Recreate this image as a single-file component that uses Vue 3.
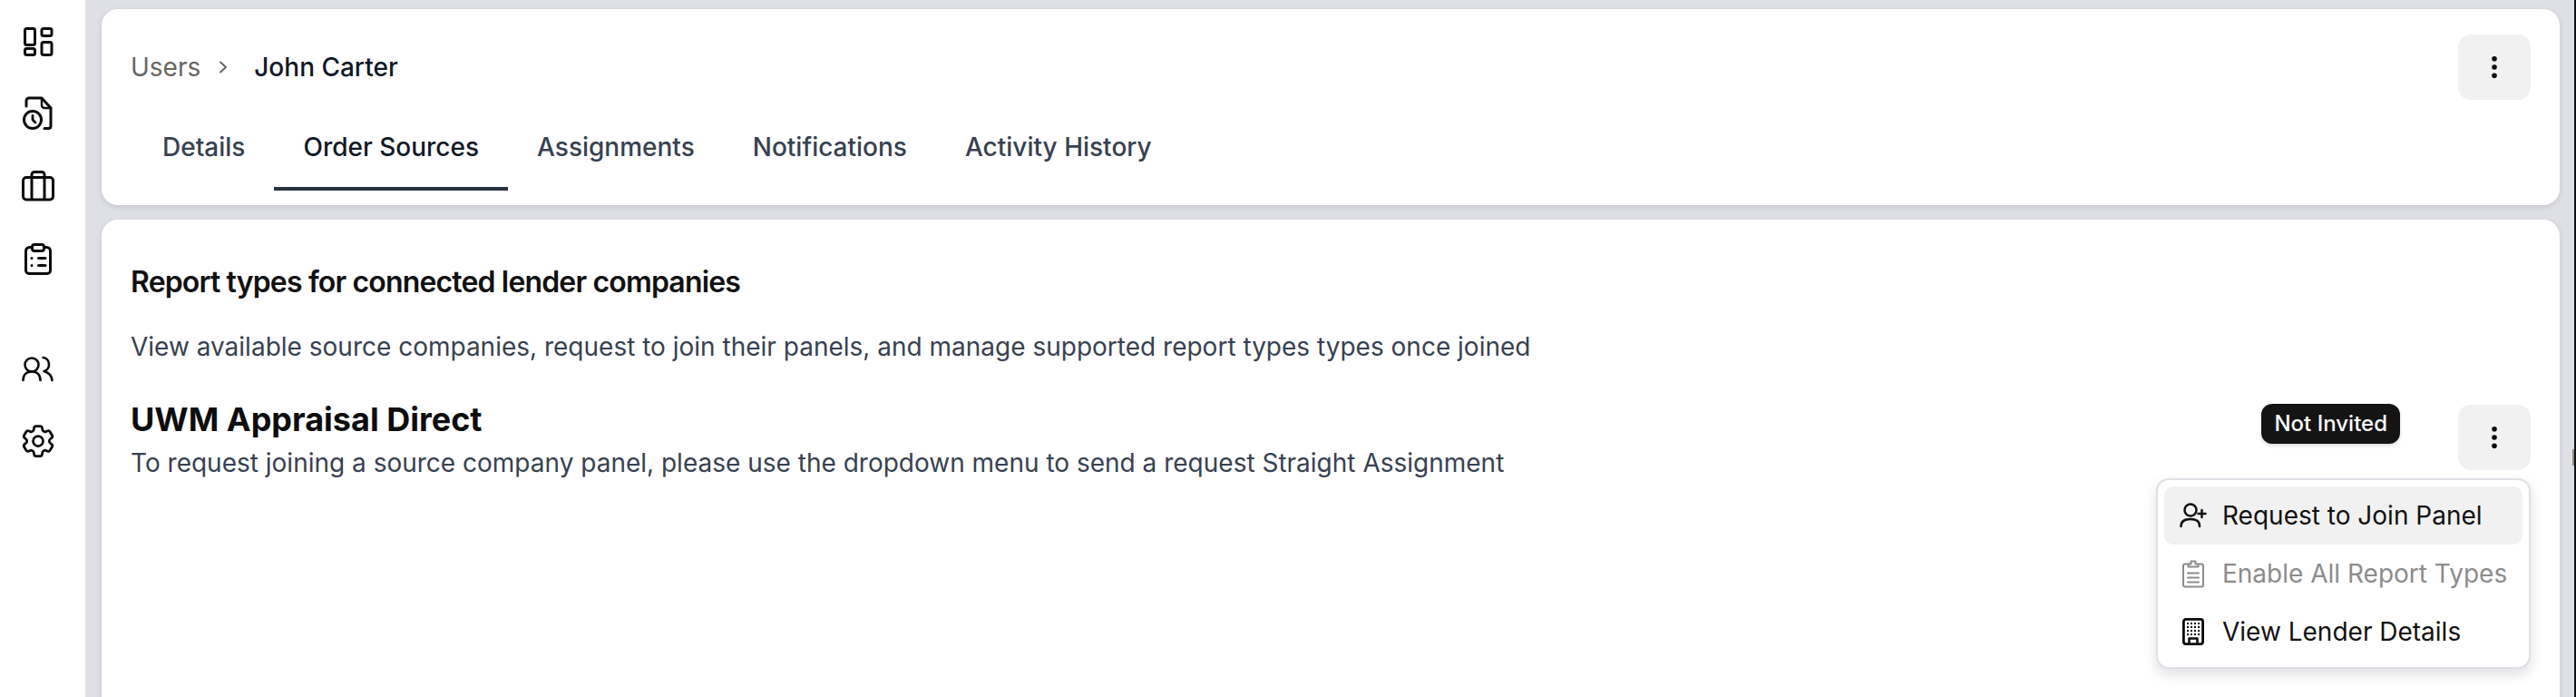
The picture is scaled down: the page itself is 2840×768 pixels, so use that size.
<template>
  <div class="app-shell">
    <aside class="sidebar">
      <nav class="nav-group">
        <a class="nav-item">
          <svg width="40" height="40" viewBox="0 0 40 40" fill="none" stroke="#0c0c0c" stroke-width="3" stroke-linejoin="round">
            <rect x="5.500" y="5.500" width="11" height="18" rx="2" />
            <rect x="24" y="5.500" width="11" height="8" rx="2" />
            <rect x="5.500" y="27.500" width="11" height="7" rx="2" />
            <rect x="24" y="20.500" width="11" height="14" rx="2" />
          </svg>
        </a>
        <a class="nav-item">
          <svg width="40" height="40" viewBox="0 0 40 40" fill="none" stroke="#0c0c0c" stroke-width="3" stroke-linecap="round" stroke-linejoin="round">
            <path d="M7 11V5a3 3 0 0 1 3-3h14l10 11v20a2.500 2.500 0 0 1-2.500 2.500H27" />
            <path d="M24 2.500V10a3 3 0 0 0 3 3h7" stroke-width="2.500" />
            <circle cx="14" cy="26" r="9.500" />
            <path d="M14 21.500V26l3 3" stroke-width="2.800" />
          </svg>
        </a>
        <a class="nav-item">
          <svg width="40" height="40" viewBox="0 0 40 40" fill="none" stroke="#0c0c0c" stroke-width="3" stroke-linejoin="round">
            <rect x="3.500" y="9.500" width="33" height="24.500" rx="3.500" />
            <path d="M13 34V6.500a3 3 0 0 1 3-3h8a3 3 0 0 1 3 3V34" />
          </svg>
        </a>
        <a class="nav-item">
          <svg width="40" height="40" viewBox="0 0 40 40" fill="none" stroke="#0c0c0c" stroke-width="3" stroke-linecap="round" stroke-linejoin="round">
            <path d="M13 6.500h-2.500a4 4 0 0 0-4 4V32a3.500 3.500 0 0 0 3.500 3.500h20a3.500 3.500 0 0 0 3.500-3.500V10.500a4 4 0 0 0-4-4H27" />
            <rect x="13.500" y="3.500" width="13" height="7" rx="2.500" />
            <path d="M20.500 18.500H28M20.500 26.500H28" />
            <path d="M13 18.500h.01M13 26.500h.01" />
          </svg>
        </a>
      </nav>
      <nav class="nav-group nav-lower">
        <a class="nav-item">
          <svg width="40" height="40" viewBox="0 0 40 40" fill="none" stroke="#0c0c0c" stroke-width="2.600" stroke-linecap="round" stroke-linejoin="round">
            <circle cx="13" cy="17" r="7.500" />
            <path d="M3.500 34c0-6 4-9.500 9.500-9.500s9.500 3.500 9.500 9.500" />
            <path d="M25.500 9c3.800 0 6.500 3.500 6.500 7.500s-2.500 7-5.500 7.500c5 1.500 8.500 5 9 10" />
          </svg>
        </a>
        <a class="nav-item">
          <svg width="44" height="44" viewBox="0 0 24 24" fill="none" stroke="#0c0c0c" stroke-width="1.500" stroke-linecap="round" stroke-linejoin="round">
            <path d="M9.594 3.940c.09-.542.56-.94 1.110-.94h2.593c.55 0 1.020.398 1.110.94l.213 1.281c.063.374.313.686.645.870.074.040.147.083.220.127.325.196.72.257 1.075.124l1.217-.456a1.125 1.125 0 0 1 1.370.490l1.296 2.247a1.125 1.125 0 0 1-.26 1.431l-1.003.827c-.293.241-.438.613-.43.992a7.723 7.723 0 0 1 0 .255c-.008.378.137.75.43.991l1.004.827c.424.35.534.955.26 1.430l-1.298 2.247a1.125 1.125 0 0 1-1.369.491l-1.217-.456c-.355-.133-.75-.072-1.076.124a6.470 6.470 0 0 1-.22.128c-.331.183-.581.495-.644.869l-.213 1.281c-.09.543-.56.94-1.110.94h-2.594c-.55 0-1.019-.398-1.110-.94l-.213-1.281c-.062-.374-.312-.686-.644-.87a6.520 6.520 0 0 1-.22-.127c-.325-.196-.72-.257-1.076-.124l-1.217.456a1.125 1.125 0 0 1-1.369-.49l-1.297-2.247a1.125 1.125 0 0 1 .26-1.431l1.004-.827c.292-.24.437-.613.43-.991a6.932 6.932 0 0 1 0-.255c.007-.38-.138-.751-.43-.992l-1.004-.827a1.125 1.125 0 0 1-.26-1.430l1.297-2.247a1.125 1.125 0 0 1 1.370-.491l1.216.456c.356.133.751.072 1.076-.124.072-.044.146-.086.22-.128.332-.183.582-.495.644-.869l.214-1.280Z" />
            <circle cx="12" cy="12" r="3" />
          </svg>
        </a>
      </nav>
    </aside>

    <main class="content">
      <section class="card header-card">
        <div class="header-top">
          <div class="breadcrumb">
            <span class="crumb-link">Users</span>
            <svg class="crumb-sep" width="28" height="28" viewBox="0 0 28 28" fill="none" stroke="#666" stroke-width="2" stroke-linecap="round" stroke-linejoin="round">
              <path d="M11 8.500l6 5.500-6 5.500" />
            </svg>
            <span class="crumb-current">John Carter</span>
          </div>
          <button class="kebab">
            <svg width="8" height="28" viewBox="0 0 8 28" fill="#0a0a0a">
              <circle cx="4" cy="4.700" r="2.800" />
              <circle cx="4" cy="14" r="2.800" />
              <circle cx="4" cy="23.300" r="2.800" />
            </svg>
          </button>
        </div>
        <div class="tabs">
          <a v-for="tab in tabs" :key="tab" class="tab" :class="{ active: tab === activeTab }">{{ tab }}</a>
        </div>
      </section>

      <section class="card body-card">
        <h2 class="section-title">Report types for connected lender companies</h2>
        <p class="section-desc">View available source companies, request to join their panels, and manage supported report types types once joined</p>

        <div class="lender-row">
          <div class="lender-info">
            <h3 class="lender-name">UWM Appraisal Direct</h3>
            <p class="lender-note">To request joining a source company panel, please use the dropdown menu to send a request Straight Assignment</p>
          </div>
          <span class="badge">Not Invited</span>
          <button class="kebab">
            <svg width="8" height="28" viewBox="0 0 8 28" fill="#0a0a0a">
              <circle cx="4" cy="4.700" r="2.800" />
              <circle cx="4" cy="14" r="2.800" />
              <circle cx="4" cy="23.300" r="2.800" />
            </svg>
          </button>

          <div class="menu">
            <div class="menu-item highlighted">
              <svg width="32" height="32" viewBox="0 0 32 32" fill="none" stroke="#111" stroke-width="2.500" stroke-linecap="round" stroke-linejoin="round">
                <circle cx="13" cy="10" r="6.500" />
                <path d="M2.500 28c0-5.500 4-8 10.500-8 3 0 5.500.5 7.500 1.800 1.500 1.300 2.500 3.300 2.500 6.200" />
                <path d="M25.500 10v8M21.500 14h8" />
              </svg>
              <span>Request to Join Panel</span>
            </div>
            <div class="menu-item disabled">
              <svg width="32" height="32" viewBox="0 0 32 32" fill="none" stroke="#8c8c8c" stroke-width="2" stroke-linecap="round" stroke-linejoin="round">
                <path d="M10.500 5.500H7a2 2 0 0 0-2 2v21a2 2 0 0 0 2 2h18a2 2 0 0 0 2-2v-21a2 2 0 0 0-2-2h-3.500" />
                <path d="M10.500 8.500v-3h3V2.500h5v3h3v3z" />
                <path d="M10 15.500h12M10 20.500h12M10 25.500h12" />
              </svg>
              <span>Enable All Report Types</span>
            </div>
            <div class="menu-item">
              <svg width="32" height="32" viewBox="0 0 32 32" fill="none" stroke="#0a0a0a" stroke-width="2.800" stroke-linejoin="round">
                <rect x="5.400" y="2.400" width="21.200" height="27.200" rx="2.500" />
                <path d="M11.500 29.500v-6h9v6" stroke-width="2.500" />
                <g fill="#0a0a0a" stroke="none">
                  <template v-for="row in [7, 11, 15, 19]" :key="row">
                    <rect v-for="col in [10, 14, 18, 22]" :key="col" :x="col - 1" :y="row - 1" width="2" height="2" />
                  </template>
                </g>
              </svg>
              <span>View Lender Details</span>
            </div>
          </div>
        </div>
      </section>
    </main>
    <i class="scroll-thumb"></i>
  </div>
</template>

<script setup>
const tabs = ['Details', 'Order Sources', 'Assignments', 'Notifications', 'Activity History']
const activeTab = 'Order Sources'
</script>

<style>
html, body { margin: 0; height: 100%; overflow: hidden; background: #dfe0e6; }
</style>

<style scoped>
.app-shell {
  position: relative;
  display: flex;
  width: 2840px;
  height: 768px;
  overflow: hidden;
  font-family: Inter, "Liberation Sans", sans-serif;
  background: #dfe0e6;
  box-sizing: border-box;
  border-right: 2px solid #111;
}

/* little grey mark sitting on the dark edge at the right */
.scroll-thumb {
  position: absolute;
  top: 495px;
  right: 0;
  width: 2px;
  height: 18px;
  background: #8a8a8a;
}

.sidebar {
  width: 94px;
  flex: none;
  background: #fff;
  display: flex;
  flex-direction: column;
  align-items: center;
  padding: 26px 10px 0 0;
  box-sizing: border-box;
}
.nav-group { display: flex; flex-direction: column; align-items: center; gap: 40px; }
.nav-lower { margin-top: 79px; gap: 41px; }
.nav-item { display: flex; width: 44px; height: 40px; align-items: center; justify-content: center; }

.content {
  flex: 1;
  min-width: 0;
  padding: 10px 16px 0 18px;
  display: flex;
  flex-direction: column;
  gap: 16px;
}

.card {
  background: #fff;
  border-radius: 18px;
  box-shadow: 0 2px 6px rgba(20, 20, 40, 0.12);
  box-sizing: border-box;
}

.header-card { height: 216px; padding: 28px 32px 0; flex: none; }
.header-top { display: flex; align-items: flex-start; justify-content: space-between; height: 72px; }
.breadcrumb { display: flex; align-items: center; height: 72px; font-size: 28px; }
.crumb-link { color: #666; }
.crumb-sep { margin: 0 20px 0 11px; }
.crumb-current { color: #111827; font-weight: 500; }

.kebab {
  width: 80px;
  height: 72px;
  flex: none;
  border: none;
  border-radius: 14px;
  background: #f1f1f1;
  display: flex;
  align-items: center;
  justify-content: center;
  padding: 0;
}

.tabs { display: flex; margin-top: 10px; margin-left: 3px; }
.tab {
  height: 90px;
  padding: 25px 32px 0;
  box-sizing: border-box;
  font-size: 28px;
  line-height: 34px;
  font-weight: 500;
  color: #374151;
  border-bottom: 4px solid transparent;
}
.tab.active { color: #111827; border-bottom-color: #2a3342; }

.body-card { flex: none; height: 560px; padding: 50px 32px 0; }
.section-title { margin: 0; font-size: 32px; line-height: 38px; font-weight: 600; letter-spacing: -0.84px; color: #111; }
.section-desc { margin: 33px 0 0; font-size: 28px; line-height: 38px; color: #374151; }

.lender-row { position: relative; display: flex; align-items: flex-start; margin-top: 45px; }
.lender-info { flex: 1; min-width: 0; margin-top: -6px; }
.lender-name { margin: 0; font-size: 36px; line-height: 44px; font-weight: 700; color: #0d0d0d; }
.lender-note { margin: 7px 0 0; font-size: 28px; line-height: 38px; color: #374151; }

.badge {
  margin: -1px 64px 0 0;
  height: 44px;
  padding: 0 14px;
  line-height: 44px;
  border-radius: 12px;
  background: #141414;
  color: #fff;
  font-size: 24px;
  font-weight: 500;
  box-shadow: 0 2px 4px rgba(0, 0, 0, 0.15);
}

.menu {
  position: absolute;
  top: 81px;
  right: 0;
  width: 413px;
  padding: 7px;
  box-sizing: border-box;
  background: #fff;
  border: 2px solid #dfe0e6;
  border-radius: 14px;
  box-shadow: 0 6px 14px rgba(20, 20, 40, 0.14);
}
.menu-item {
  display: flex;
  align-items: center;
  gap: 16px;
  height: 64px;
  padding-left: 16px;
  border-radius: 10px;
  font-size: 28px;
  color: #111;
}
.menu-item.highlighted { background: #f1f1f1; }
.menu-item.disabled { color: #8c8c8c; }
</style>
